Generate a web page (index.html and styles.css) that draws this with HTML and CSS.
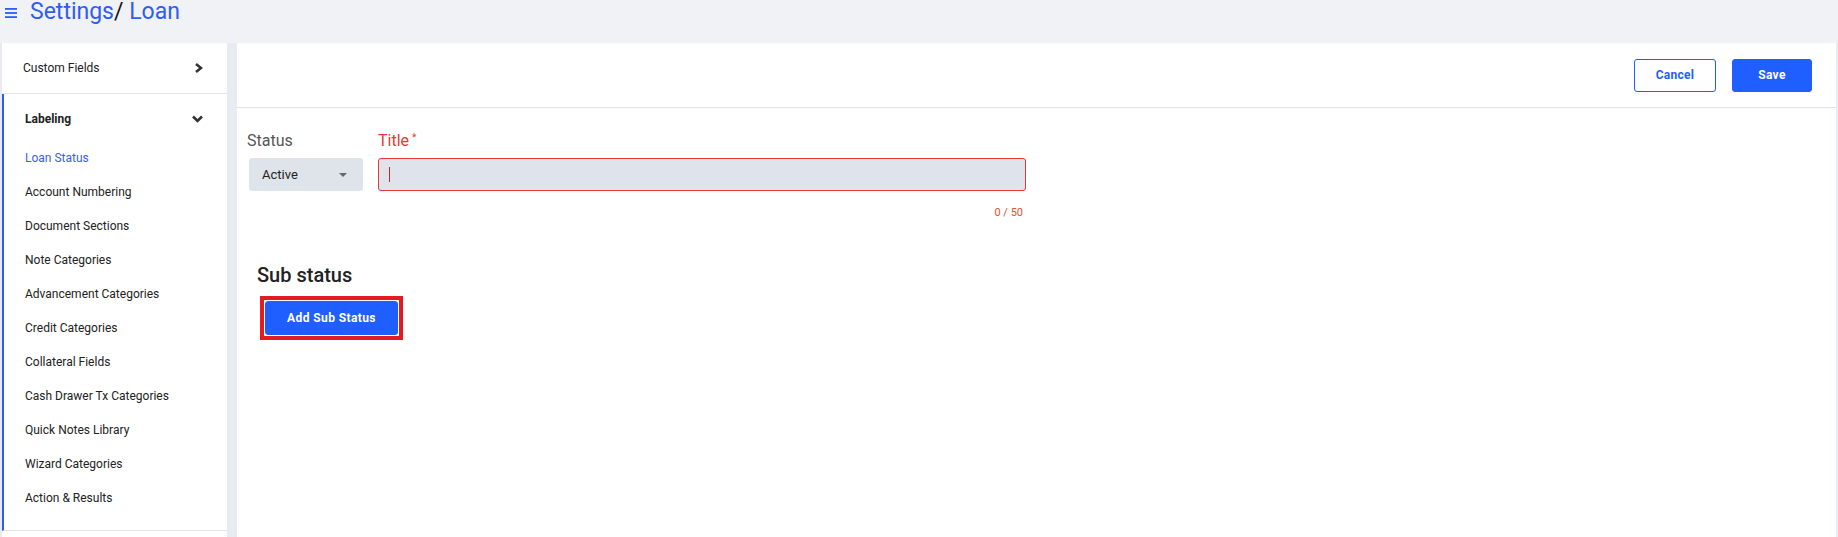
FILE: index.html
```html
<!DOCTYPE html>
<html lang="en">
<head>
    <meta charset="UTF-8" />
    <meta name="viewport" content="width=device-width, initial-scale=1" />
    <title>Settings / Loan</title>
    <link rel="stylesheet" href="styles.css">
</head>
<body>

    <header class="topbar">
        <span class="menu-icon">
            <svg width="12" height="10" viewBox="0 0 12 10">
                <rect x="0" y="0" width="12" height="1.8" fill="#2e5cf6" />
                <rect x="0" y="4.1" width="12" height="1.8" fill="#2e5cf6" />
                <rect x="0" y="8.2" width="12" height="1.8" fill="#2e5cf6" />
            </svg>
        </span>
        <h1 class="crumbs">
            <span class="crumb">Settings</span><span class="crumb-sep">/</span>
            <span class="crumb">Loan</span>
        </h1>
    </header>

    <div class="layout">
        <aside class="sidebar">
            <div class="side-group">
                <span>Custom Fields</span>
                <svg class="chev" width="9" height="10" viewBox="0 0 9 10">
                    <path d="M2 1 L7 5 L2 9" fill="none" stroke="#333" stroke-width="2.6" />
                </svg>
            </div>

            <div class="side-group-open">
                <div class="side-group side-group-head">
                    <span>Labeling</span>
                    <svg class="chev" width="11" height="8" viewBox="0 0 11 8">
                        <path d="M1 1.5 L5.5 6 L10 1.5" fill="none" stroke="#333" stroke-width="2.6" />
                    </svg>
                </div>
                <ul class="side-links">
                    <li class="active">Loan Status</li>
                    <li>Account Numbering</li>
                    <li>Document Sections</li>
                    <li>Note Categories</li>
                    <li>Advancement Categories</li>
                    <li>Credit Categories</li>
                    <li>Collateral Fields</li>
                    <li>Cash Drawer Tx Categories</li>
                    <li>Quick Notes Library</li>
                    <li>Wizard Categories</li>
                    <li>Action &amp; Results</li>
                </ul>
            </div>
            <div class="side-rest"></div>
        </aside>

        <main class="panel">
            <div class="panel-head">
                <button class="btn btn-outline">Cancel</button>
                <button class="btn btn-primary">Save</button>
            </div>

            <div class="panel-body">
                <div class="form-row">
                    <div class="field field-status">
                        <label>Status</label>
                        <div class="select">
                            <span>Active</span>
                            <span class="select-caret"></span>
                        </div>
                    </div>
                    <div class="field field-title">
                        <label class="label-error">Title<sup>*</sup></label>
                        <div class="text-input"><span class="text-cursor"></span></div>
                        <div class="counter">0 / 50</div>
                    </div>
                </div>

                <section class="sub-status">
                    <h2>Sub status</h2>
                    <span class="highlight">
                        <button class="btn btn-primary btn-add">Add Sub Status</button>
                    </span>
                </section>
            </div>
        </main>
    </div>

</body>
</html>
```

FILE: styles.css
```css
body {
    margin: 0;
    font-family: Roboto, "Liberation Sans", sans-serif;
    background-color: #f1f2f5;
    color: #222;
}
.topbar {
    height: 43px;
    display: flex;
    align-items: flex-start;
    padding-left: 5px;
}
.menu-icon {
    margin-top: 8px;
    margin-right: 13px;
    display: flex;
}
.crumbs {
    margin: 0;
    font-size: 23px;
    line-height: 24px;
    font-weight: 400;
    color: #2e5cf6;
}
.crumb-sep {
    color: #111;
}
.layout {
    display: flex;
    background-color: #e8ebef;
    height: 494px;
    gap: 10px;
    padding: 0 2px;
}
.sidebar {
    width: 225px;
    background-color: #fff;
    display: flex;
    flex-direction: column;
}
.side-group {
    height: 50px;
    display: flex;
    align-items: center;
    justify-content: space-between;
    padding: 0 24px 0 21px;
    font-size: 12px;
    color: #222;
    border-bottom: 1px solid #e3e5ea;
}
.side-group-open {
    border-left: 2px solid #2e5cf6;
    border-bottom: 1px solid #e3e5ea;
}
.side-group-head {
    height: 47px;
    border-bottom: none;
    font-weight: 700;
    padding-left: 21px;
    padding-right: 24px;
    padding-top: 2px;
    box-sizing: border-box;
}
.side-links {
    list-style: none;
    margin: 0;
    padding: 0 0 15px 0;
}
.side-links li {
    height: 34px;
    line-height: 34px;
    padding-left: 21px;
    font-size: 12px;
    color: #222;
}
.side-links li.active {
    color: #3d5cf5;
}
.panel {
    flex: 1;
    background-color: #fff;
    display: flex;
    flex-direction: column;
}
.panel-head {
    height: 64px;
    display: flex;
    align-items: center;
    justify-content: flex-end;
    gap: 16px;
    padding-right: 24px;
    border-bottom: 1px solid #e0e2e6;
}
.btn {
    height: 33px;
    border-radius: 3px;
    font-family: Roboto, "Liberation Sans", sans-serif;
    font-size: 12px;
    font-weight: 700;
    letter-spacing: 0.3px;
    cursor: pointer;
    padding: 0;
}
.btn-outline {
    width: 82px;
    background-color: #fff;
    color: #1f5eff;
    border: 1px solid #1f5eff;
}
.btn-primary {
    width: 80px;
    background-color: #1f5eff;
    color: #fff;
    border: 1px solid #1f5eff;
}
.panel-body {
    padding: 23px 10px 0 10px;
}
.form-row {
    display: flex;
    gap: 14px;
}
.field label {
    display: block;
    font-size: 16px;
    line-height: 19px;
    color: #555;
    margin-bottom: 8px;
}
.field-status .select {
    margin-left: 2px;
}
.label-error {
    color: #e53935 !important;
}
.label-error sup {
    font-size: 10px;
    margin-left: 3px;
    vertical-align: 5px;
    line-height: 0;
}
.select {
    width: 114px;
    height: 33px;
    box-sizing: border-box;
    background-color: #dfe3ea;
    border-radius: 3px;
    display: flex;
    align-items: center;
    justify-content: space-between;
    padding: 0 16px 0 13px;
    font-size: 13px;
    color: #222;
}
.select-caret {
    width: 0;
    height: 0;
    border-left: 4px solid transparent;
    border-right: 4px solid transparent;
    border-top: 4px solid #666;
}
.field-title {
    margin-left: 1px;
}
.text-input {
    width: 648px;
    height: 33px;
    box-sizing: border-box;
    background-color: #dfe3eb;
    border: 1px solid #e53935;
    border-radius: 3px;
    display: flex;
    align-items: center;
    padding-left: 10px;
}
.text-cursor {
    width: 1px;
    height: 15px;
    background-color: #c0262b;
}
.counter {
    text-align: right;
    font-size: 11px;
    color: #e4502a;
    margin-top: 15px;
    padding-right: 3px;
}
.sub-status {
    padding-left: 10px;
    margin-top: 44px;
}
.sub-status h2 {
    margin: 0 0 9px 0;
    font-size: 20px;
    line-height: 24px;
    font-weight: 500;
    color: #222;
}
.highlight {
    display: inline-flex;
    margin-left: 3px;
    padding: 1px;
    border: 4px solid #e31c24;
    background-color: #fff;
}
.btn-add {
    width: 133px;
    height: 34px;
    letter-spacing: 0.4px;
}
```
